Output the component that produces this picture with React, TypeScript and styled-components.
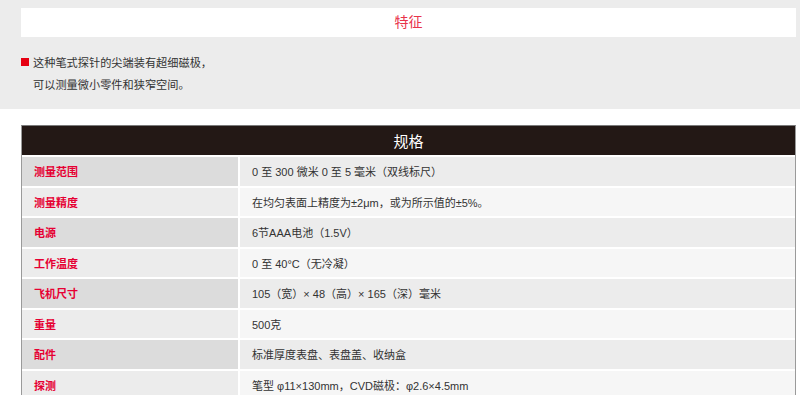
import styled, { createGlobalStyle } from 'styled-components';

const GlobalStyle = createGlobalStyle`
  body {
    margin: 0;
    background: #ffffff;
    font-family: "Liberation Sans", "Noto Sans CJK SC", sans-serif;
  }
`;

const Page = styled.div`
  width: 800px;
`;

const FeatureSection = styled.section`
  background: #ececec;
  padding: 8px 4px 13px 21px;
`;

const SectionTitle = styled.div`
  background: #ffffff;
  height: 29px;
  line-height: 29px;
  text-align: center;
  color: #e8334a;
  font-size: 14px;
`;

const FeatureText = styled.p`
  position: relative;
  margin: 15px 0 0;
  padding-left: 12px;
  font-size: 11.2px;
  line-height: 22px;
  color: #333333;

  &::before {
    content: '';
    position: absolute;
    left: 0;
    top: 6px;
    width: 8px;
    height: 8px;
    background: #e60012;
  }
`;

const SpecWrapper = styled.div`
  padding: 16px 4px 0 21px;
`;

const SpecTable = styled.table`
  width: 100%;
  border-collapse: separate;
  border-spacing: 0;
  border-left: 1px solid #9a9a9a;
  border-right: 1px solid #9a9a9a;
  border-top: 1px solid #7a7a7a;
  font-size: 11px;
`;

const HeaderCell = styled.th`
  background: #231815;
  color: #ffffff;
  height: 29px;
  font-size: 15px;
  font-weight: normal;
  text-align: center;
  padding: 0;
`;

const LabelCell = styled.td<{ $odd: boolean }>`
  width: 204px;
  height: 28.5px;
  padding: 0 0 0 12px;
  background: ${p => (p.$odd ? '#dcdcdc' : '#ececec')};
  color: #e60033;
  font-weight: bold;
  border-top: 2px solid #ffffff;
  border-right: 2px solid #ffffff;
`;

const ValueCell = styled.td<{ $odd: boolean }>`
  height: 28.5px;
  padding: 0 0 0 12px;
  background: ${p => (p.$odd ? '#ececec' : '#f6f6f6')};
  color: #333333;
  border-top: 2px solid #ffffff;
`;

const specs: [string, string][] = [
  ['测量范围', '0 至 300 微米 0 至 5 毫米（双线标尺）'],
  ['测量精度', '在均匀表面上精度为±2μm，或为所示值的±5%。'],
  ['电源', '6节AAA电池（1.5V）'],
  ['工作温度', '0 至 40°C（无冷凝）'],
  ['飞机尺寸', '105（宽）× 48（高）× 165（深）毫米'],
  ['重量', '500克'],
  ['配件', '标准厚度表盘、表盘盖、收纳盒'],
  ['探测', '笔型 φ11×130mm，CVD磁极：φ2.6×4.5mm'],
];

export default function App() {
  return (
    <Page>
      <GlobalStyle />
      <FeatureSection>
        <SectionTitle>特征</SectionTitle>
        <FeatureText>
          这种笔式探针的尖端装有超细磁极，
          <br />
          可以测量微小零件和狭窄空间。
        </FeatureText>
      </FeatureSection>
      <SpecWrapper>
        <SpecTable>
          <thead>
            <tr>
              <HeaderCell colSpan={2}>规格</HeaderCell>
            </tr>
          </thead>
          <tbody>
            {specs.map(([label, value], i) => (
              <tr key={label}>
                <LabelCell $odd={i % 2 === 0}>{label}</LabelCell>
                <ValueCell $odd={i % 2 === 0}>{value}</ValueCell>
              </tr>
            ))}
          </tbody>
        </SpecTable>
      </SpecWrapper>
    </Page>
  );
}
